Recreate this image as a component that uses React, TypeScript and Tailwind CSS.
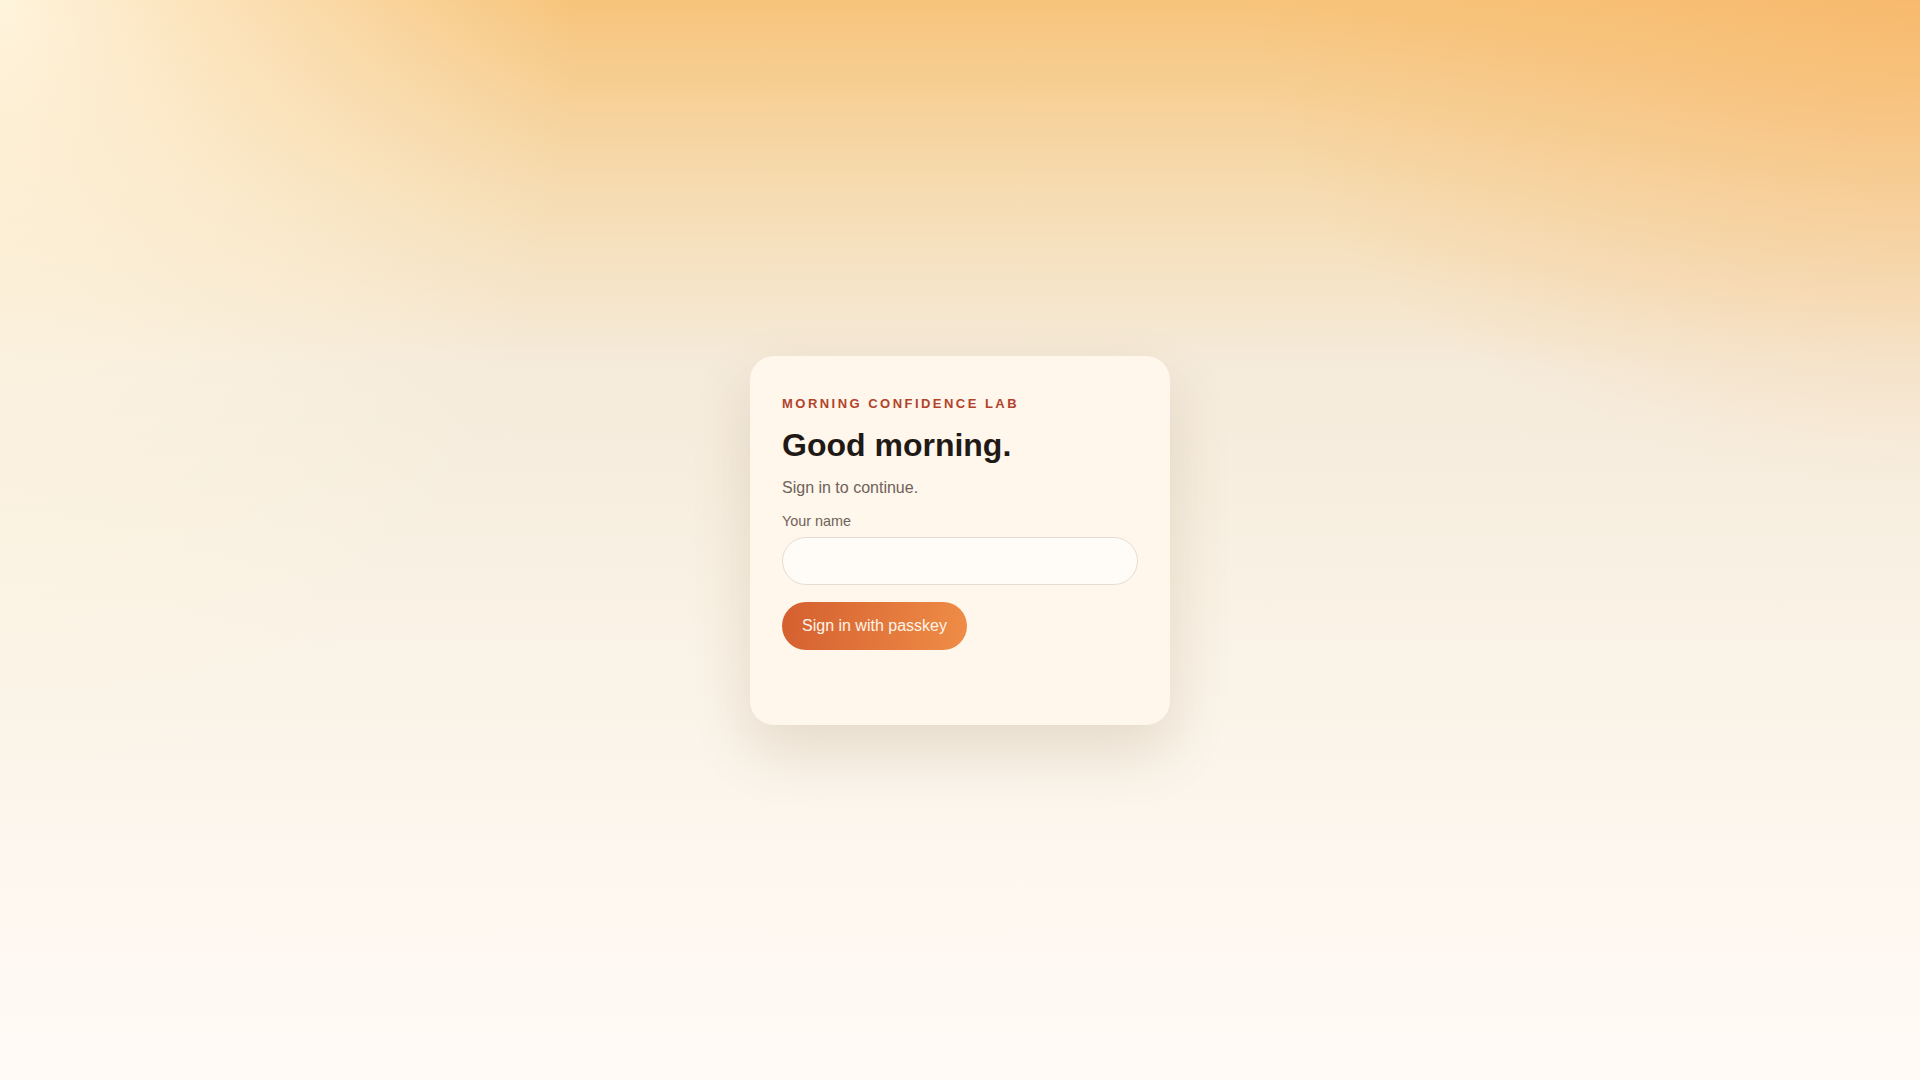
import React from 'react';

export default function App() {
  return (
    <div
      className="min-h-screen w-full flex items-center justify-center bg-[#fdf8f1] bg-[radial-gradient(ellipse_30%_75%_at_0%_0%,rgba(255,246,226,0.95)_0%,rgba(255,246,226,0)_100%),radial-gradient(ellipse_35%_45%_at_100%_0%,rgba(248,178,98,0.55)_0%,rgba(248,178,98,0)_100%),linear-gradient(180deg,#f7c47b_0%,#f6dcb2_18%,#f5ebdb_34%,#f9f1e4_55%,#fdf7ef_80%,#fffaf5_100%)]"
      style={{ fontFamily: '"Liberation Sans", Arial, sans-serif' }}
    >
      {/* Card */}
      <div className="w-[420px] rounded-3xl bg-[#fff6ec] px-8 pt-10 pb-10 shadow-[0_26px_60px_rgba(120,80,40,0.16)]">
        <p className="text-[13px] leading-[16px] font-bold tracking-[0.19em] text-[#b2432a] uppercase">
          Morning Confidence Lab
        </p>
        <h1 className="mt-[14px] text-[32px] leading-[38px] font-bold text-[#1f1a16]">
          Good morning.
        </h1>
        <p className="mt-[12px] text-base leading-6 text-[#6e625a]">
          Sign in to continue.
        </p>

        <label className="mt-[11px] block text-[14.4px] leading-5 text-[#6e625a]" htmlFor="name">
          Your name
        </label>
        <input
          id="name"
          type="text"
          className="mt-[6px] block h-12 w-full rounded-full border border-[#e6dcd4] bg-[#fffcf8] px-4 text-base text-[#1f1a16] outline-none"
        />

        <button
          type="button"
          className="mt-[17px] h-12 rounded-full bg-[linear-gradient(100deg,#d45f2f_0%,#ef8d47_100%)] px-5 text-base text-[#fff4e8]"
        >
          Sign in with passkey
        </button>

        {/* status line */}
        <p className="mt-4 min-h-[19px] text-sm text-[#6e625a]"></p>
      </div>
    </div>
  );
}
